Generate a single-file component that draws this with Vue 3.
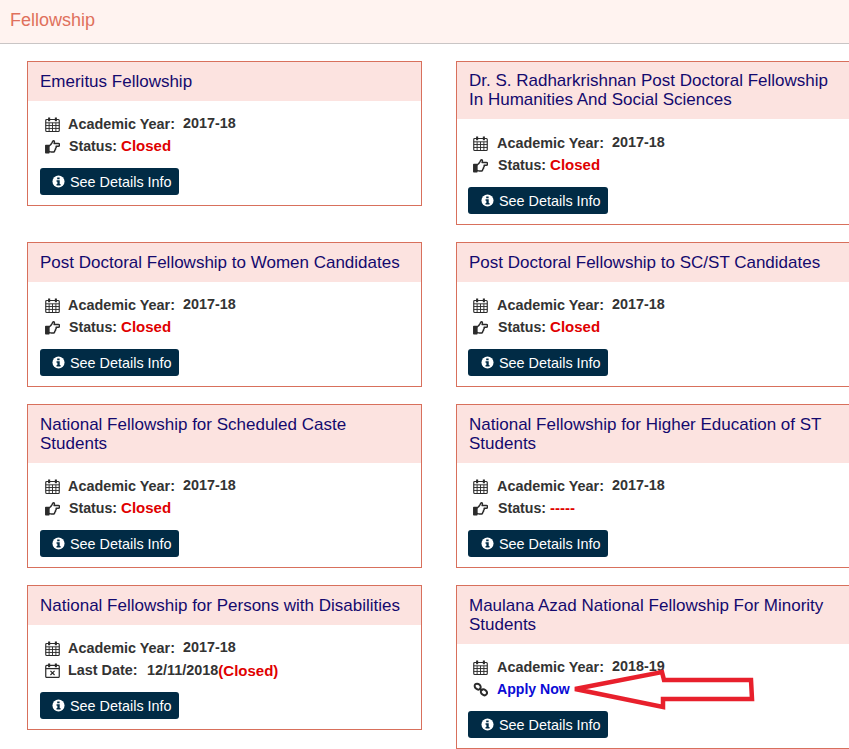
<script setup>
const cards = [
  { title: 'Emeritus Fellowship', year: '2017-18', kind: 'closed' },
  { title: 'Dr. S. Radharkrishnan Post Doctoral Fellowship In Humanities And Social Sciences', year: '2017-18', kind: 'closed' },
  { title: 'Post Doctoral Fellowship to Women Candidates', year: '2017-18', kind: 'closed' },
  { title: 'Post Doctoral Fellowship to SC/ST Candidates', year: '2017-18', kind: 'closed' },
  { title: 'National Fellowship for Scheduled Caste Students', year: '2017-18', kind: 'closed' },
  { title: 'National Fellowship for Higher Education of ST Students', year: '2017-18', kind: 'dash' },
  { title: 'National Fellowship for Persons with Disabilities', year: '2017-18', kind: 'date' },
  { title: 'Maulana Azad National Fellowship For Minority Students', year: '2018-19', kind: 'apply' }
]
</script>

<template>
  <div class="page">
    <header class="bar">Fellowship</header>
    <main class="grid">
      <article v-for="card in cards" :key="card.title" class="card">
        <h3 class="title">{{ card.title }}</h3>
        <div class="body">
          <div class="row">
            <svg class="ico" viewBox="0 0 16 16" fill="none" stroke="#2b2b2b" stroke-width="1.2">
              <rect x=".8" y="2.6" width="14.4" height="12.8" rx="1" />
              <path d="M.8 6.2h14.4M.8 9.1h14.4M.8 12.2h14.4M4.4 6.2v9.2M8 6.2v9.2M11.6 6.2v9.2" stroke-width="1" />
              <path d="M4.4 .6v3.8M11.6 .6v3.8" stroke-width="2.2" />
            </svg>
            <span class="label">Academic Year:</span>
            <span class="value">{{ card.year }}</span>
          </div>
          <div v-if="card.kind === 'date'" class="row">
            <svg class="ico" viewBox="0 0 16 16" fill="none" stroke="#2b2b2b" stroke-width="1.3">
              <rect x=".8" y="2.6" width="14.4" height="12.8" rx="1" />
              <path d="M.8 6h14.4" />
              <path d="M5.8 8.4l4.4 4.4M10.2 8.4l-4.4 4.4" />
              <path d="M4.4 .6v3.8M11.6 .6v3.8" stroke-width="2.2" />
            </svg>
            <span class="label">Last Date:</span>
            <span class="value date">12/11/2018</span><span class="red big">(Closed)</span>
          </div>
          <div v-else-if="card.kind === 'apply'" class="row">
            <svg class="ico" viewBox="0 0 16 16" fill="none" stroke="#2b2b2b" stroke-width="2.1">
              <ellipse cx="5" cy="4.9" rx="3.5" ry="2.8" transform="rotate(40 5 4.9)" />
              <ellipse cx="11.6" cy="11" rx="3.5" ry="2.8" transform="rotate(40 11.6 11)" />
              <path d="M6.9 6.6l3 3" />
            </svg>
            <a class="apply">Apply Now</a>
          </div>
          <div v-else class="row">
            <svg class="ico" viewBox="0 0 17 16" fill="none" stroke="#2b2b2b" stroke-width="1.7" stroke-linejoin="round">
              <rect x=".9" y="6.8" width="3.5" height="8.2" fill="#2b2b2b" />
              <path d="M4.4 7.6c1.8-.8 2.8-2.4 3.6-4 .4-.9.7-2 1.6-2 1.2 0 1.3 1.5.7 3h4.8c1.9 0 1.9 3 0 3h-2.5c.4 1.1 0 2.1-.7 2.5.3 1-.2 1.9-.9 2.2.1 1-.5 2-1.8 2H7.2c-1 0-1.8-.4-2.8-.7" />
            </svg>
            <span class="label status">Status:</span>
            <span v-if="card.kind === 'closed'" class="red big up">Closed</span>
            <span v-else class="red big up">-----</span>
          </div>
          <a class="btn">
            <svg class="info" viewBox="0 0 14 14">
              <circle cx="7" cy="7" r="6.5" fill="#fff" />
              <path d="M5.6 2.6h2.6v2H5.6zM4.9 5.6h3.4v4.1h.9v1.7H4.9V9.7h.9V7.3h-.9z" fill="#012b45" />
            </svg>
            See Details Info
          </a>
        </div>
      </article>
    </main>
    <svg class="arrow" viewBox="0 0 190 50" fill="none" stroke="#e8202c" stroke-width="4.5" stroke-linejoin="miter">
      <path d="M3 20L90 3L92 11L179 11L180 30L91 30L91 38Z" />
    </svg>
  </div>
</template>

<style scoped>
.page {
  position: relative;
  width: 849px;
  height: 749px;
  overflow: hidden;
  background: #fff;
  font-family: "Liberation Sans", Arial, sans-serif;
}
.bar {
  height: 43px;
  padding-left: 10px;
  line-height: 41px;
  font-size: 18px;
  color: #e0705c;
  background: #fff3f0;
  border-bottom: 1px solid #c9c5c5;
}
.grid {
  display: grid;
  grid-template-columns: 395px 395px;
  column-gap: 34px;
  row-gap: 17px;
  align-items: start;
  padding: 17px 0 0 27px;
}
.card {
  border: 1px solid #d8705c;
  background: #fff;
}
.title {
  margin: 0;
  padding: 10px 12px;
  font-size: 17px;
  font-weight: 400;
  line-height: 19px;
  color: #140a6e;
  background: #fce3e0;
}
.card:nth-child(2) .title {
  line-height: 18.5px;
}
.body {
  padding: 12px 12px 10px;
}
.card:nth-child(2) .body {
  padding-top: 13px;
}
.card:nth-child(even) .body {
  padding-left: 11px;
}
.row {
  display: flex;
  align-items: center;
  height: 22px;
  padding-left: 5px;
  font-size: 14.4px;
  font-weight: 700;
  color: #333;
  white-space: nowrap;
}
.ico {
  width: 15px;
  height: 15px;
  margin-right: 8px;
  flex: none;
}
.card:nth-child(even) .ico {
  margin-right: 9px;
}
.value {
  margin-left: 8px;
  position: relative;
  top: -1px;
}
.date {
  top: 0;
  margin-left: 9.5px;
}
.status {
  margin-left: 1px;
  margin-right: 4px;
  font-size: 14.2px;
}
.red {
  color: #e00000;
}
.big {
  font-size: 15px;
}
.up {
  position: relative;
  top: -1px;
}
.apply {
  color: #0b0bd6;
  font-size: 14.1px;
}
.btn {
  display: inline-flex;
  align-items: center;
  height: 27px;
  width: 139px;
  box-sizing: border-box;
  margin-top: 11px;
  padding-left: 12px;
  background: #012b45;
  color: #fff;
  border-radius: 3px;
  font-size: 14.4px;
}
.card:nth-child(even) .btn {
  width: 140px;
  padding-left: 13px;
}
.info {
  width: 13px;
  height: 13px;
  margin-right: 5px;
}
.arrow {
  position: absolute;
  left: 572px;
  top: 669px;
  width: 190px;
  height: 50px;
}
</style>
